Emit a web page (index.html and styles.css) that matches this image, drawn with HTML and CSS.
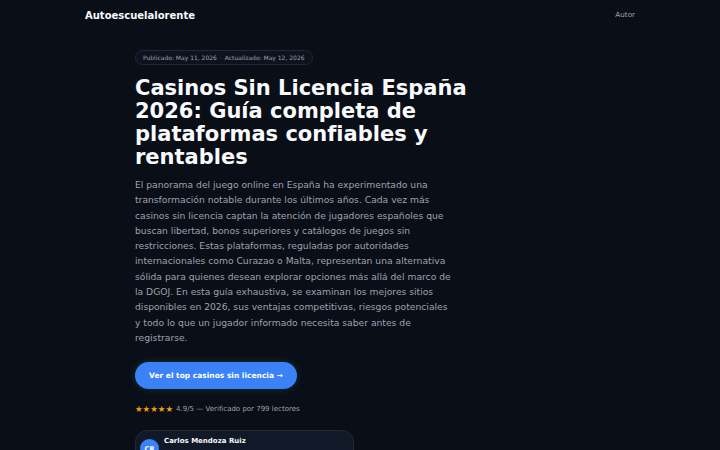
FILE: index.html
```html
<!DOCTYPE html>
<html lang="es">
<head>
    <meta charset="UTF-8">
    <meta name="viewport" content="width=device-width, initial-scale=1.0">
    <title>Casinos Sin Licencia España 2026</title>
    <link rel="stylesheet" href="styles.css">
</head>
<body>
    <header class="site-header">
        <a class="brand" href="#">Autoescuelalorente</a>
        <nav class="site-nav">
            <a href="#">Autor</a>
        </nav>
    </header>

    <main class="article">
        <div class="meta-pill">
            <span>Publicado: May 11, 2026</span>
            <span class="meta-dot">·</span>
            <span>Actualizado: May 12, 2026</span>
        </div>

        <h1 class="article-title">Casinos Sin Licencia España 2026: Guía completa de plataformas confiables y rentables</h1>

        <p class="lead">El panorama del juego online en España ha experimentado una transformación notable durante los últimos años. Cada vez más casinos sin licencia captan la atención de jugadores españoles que buscan libertad, bonos superiores y catálogos de juegos sin restricciones. Estas plataformas, reguladas por autoridades internacionales como Curazao o Malta, representan una alternativa sólida para quienes desean explorar opciones más allá del marco de la DGOJ. En esta guía exhaustiva, se examinan los mejores sitios disponibles en 2026, sus ventajas competitivas, riesgos potenciales y todo lo que un jugador informado necesita saber antes de registrarse.</p>

        <a class="cta" href="#">Ver el top casinos sin licencia →</a>

        <div class="rating">
            <span class="stars">★★★★★</span>
            <span>4.9/5 — Verificado por 799 lectores</span>
        </div>

        <div class="author-card">
            <span class="avatar">CR</span>
            <div class="author-info">
                <strong class="author-name">Carlos Mendoza Ruiz</strong>
            </div>
        </div>
    </main>
</body>
</html>
```

FILE: styles.css
```css
html, body {
    margin: 0;
    padding: 0;
}
body {
    font-family: 'DejaVu Sans', 'Noto Sans', sans-serif;
    background-color: #0a0e17;
    color: #e5e7eb;
    min-height: 450px;
}
a {
    text-decoration: none;
    color: inherit;
}

/* cabecera */
.site-header {
    max-width: 550px;
    margin: 0 auto;
    height: 30px;
    display: flex;
    align-items: center;
    justify-content: space-between;
}
.brand {
    font-size: 10px;
    font-weight: bold;
    color: #f8fafc;
}
.site-nav {
    font-size: 7.2px;
    line-height: 1;
}
.site-nav a {
    color: #9ca3af;
}

/* artículo */
.article {
    max-width: 450px;
    margin: 0 auto;
    padding-top: 20px;
    display: flex;
    flex-direction: column;
    align-items: flex-start;
}
.meta-pill {
    display: flex;
    gap: 3px;
    align-items: center;
    font-size: 6px;
    line-height: 1;
    color: #9ca3af;
    border: 1px solid #1f2937;
    background-color: #0d121c;
    border-radius: 999px;
    padding: 3.5px 7px;
}
.meta-dot {
    color: #4b5563;
}
.article-title {
    font-size: 21px;
    line-height: 23px;
    font-weight: bold;
    color: #f8fafc;
    max-width: 345px;
    margin: 12px 0 0;
}
.lead {
    font-size: 9.2px;
    line-height: 15.3px;
    color: #9ca3af;
    max-width: 318px;
    margin: 8px 0 0;
}
.cta {
    margin-top: 17px;
    background-color: #3b82f6;
    color: #fff;
    font-size: 7.5px;
    font-weight: bold;
    padding: 9px 14px;
    border-radius: 999px;
    box-shadow: 0 0 8px rgba(20, 184, 166, 0.2);
}
.rating {
    margin-top: 15px;
    font-size: 7px;
    color: #9ca3af;
    display: flex;
    align-items: center;
    gap: 3px;
}
.stars {
    color: #f59e0b;
    font-size: 8.5px;
}
.author-card {
    margin-top: 16px;
    width: 209px;
    display: flex;
    align-items: flex-start;
    gap: 5px;
    padding: 6px 4px;
    background-color: #111827;
    border: 1px solid #1f2937;
    border-radius: 12px;
}
.avatar {
    flex-shrink: 0;
    width: 19px;
    height: 19px;
    border-radius: 50%;
    background-color: #3b82f6;
    color: #fff;
    font-size: 6.5px;
    font-weight: bold;
    display: flex;
    align-items: center;
    justify-content: center;
    margin-top: 2px;
}
.author-info {
    font-size: 7px;
    line-height: 1.3;
}
.author-name {
    color: #f8fafc;
}
```
